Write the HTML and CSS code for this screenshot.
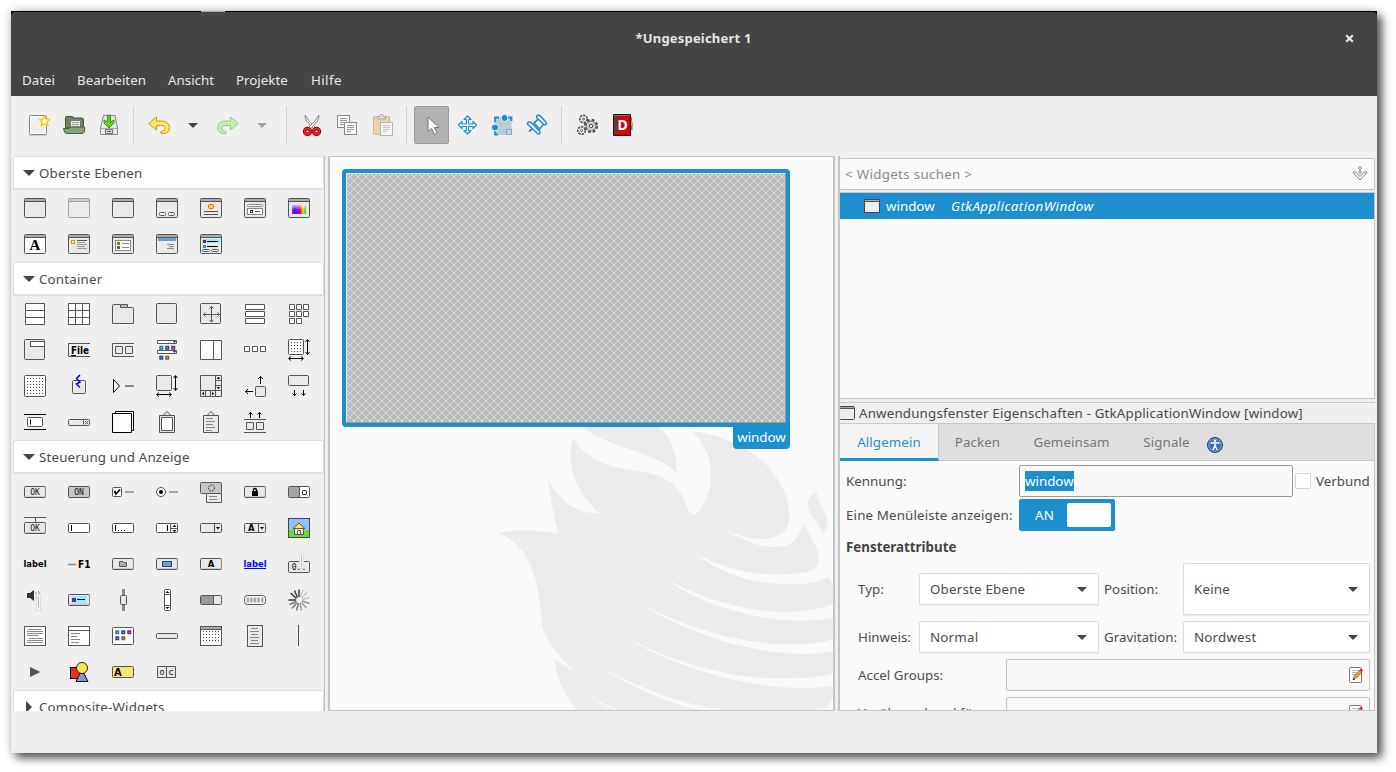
FILE: index.html
```
<!DOCTYPE html>
<html lang="de">
<head>
<meta charset="utf-8">
<title>*Ungespeichert 1</title>
<link rel="stylesheet" href="styles.css">
</head>
<body>
<svg class="defs" width="0" height="0">
  <defs>
    <pattern id="dots" width="3" height="3" patternUnits="userSpaceOnUse"><rect x="1" y="1" width="1" height="1" fill="#444"/></pattern>
    <pattern id="lattice" width="8" height="8" patternUnits="userSpaceOnUse"><path d="M-1 -1L9 9M9 -1L-1 9" stroke="#dcdcdc" stroke-width="1" fill="none"/></pattern>
    <linearGradient id="rainbow"><stop offset="0" stop-color="#e000c0"/><stop offset=".2" stop-color="#2020ff"/><stop offset=".45" stop-color="#a000f0"/><stop offset=".6" stop-color="#f01020"/><stop offset=".78" stop-color="#f0e000"/><stop offset="1" stop-color="#00e060"/></linearGradient>
    <linearGradient id="fade" x1="0" y1="0" x2="0" y2="1"><stop offset="0" stop-color="#fff" stop-opacity=".7"/><stop offset="1" stop-color="#fff" stop-opacity="0"/></linearGradient>
    <symbol id="win" viewBox="0 0 24 24"><rect class="s" x="1.500" y="2.500" width="21" height="19" rx="1"/><path d="M2 4H22" stroke="#aaa" stroke-width="2"/><path class="n" d="M1.500 5.500H22.500"/></symbol>
    <symbol id="btn" viewBox="0 0 24 24"><rect class="s" x="1.500" y="6.500" width="21" height="11" rx="1"/><path d="M3 16.500H22V8" stroke="#ccc" fill="none"/></symbol>
    <symbol id="line" viewBox="0 0 24 24"><rect class="w" x="1.500" y="7.500" width="21" height="9" rx="1"/></symbol>
    <symbol id="varrow" viewBox="0 0 24 24"><path class="b" d="M20.500 2V16M18.500 4L20.500 1.500L22.500 4M18.500 14L20.500 16.500L22.500 14M2 20.500H16M4 18.500L1.500 20.500L4 22.500M14 18.500L16.500 20.500L14 22.500"/></symbol>
    <symbol id="pencil" viewBox="0 0 16 16"><rect x="1.500" y=".5" width="12" height="15" rx="1" fill="#fff" stroke="#777"/><path d="M4 3.500H11M4 5.500H9M4 7.500H8" stroke="#bbb"/><path d="M5 13L6 9.500L12 3L14 5L8 11.500Z" fill="#f0a030" stroke="#9a5a10" stroke-width=".8"/><path d="M5 13L5.500 11L7 12.400Z" fill="#222"/><path d="M11.500 3L13 1.500L15 3.500L13.500 5Z" fill="#d02020"/></symbol>
  </defs>
</svg>
<div class="window">
  <header class="titlebar">
    <div class="title-row"><span class="title">*Ungespeichert 1</span>
      <svg class="close" viewBox="0 0 9 9"><path d="M1.200 1.200L7.800 7.800M7.800 1.200L1.200 7.800" stroke="#e6e6e6" stroke-width="2.200"/></svg></div>
    <nav class="menu"><span class="m1">Datei</span><span class="m2">Bearbeiten</span><span class="m3">Ansicht</span><span class="m4">Projekte</span><span class="m5">Hilfe</span></nav>
  </header>

  <div class="toolbar">
    <span class="tool"><svg viewBox="0 0 24 24"><rect x="2.500" y="2.500" width="17" height="19" rx="1" fill="#eee" stroke="#888"/><rect x="3.500" y="3.500" width="15" height="17" fill="none" stroke="#fff"/><path d="M2 22.500H20" stroke="#ccc"/><path d="M17.500 3L19 6.200L22.500 6.600L20 9L20.700 12.500L17.500 10.800L14.300 12.500L15 9L12.500 6.600L16 6.200Z" fill="#fffef0" stroke="#ecd510" stroke-width="1.700" stroke-linejoin="round"/></svg></span>
    <span class="tool"><svg viewBox="0 0 24 24"><path d="M3.500 15V4.500Q3.500 3.500 5 3.500H10Q11 3.500 12 5H20Q21.500 5 21.500 7V15Z" fill="#6b8560" stroke="#40533b"/><path d="M8.500 15V7.500H18.500V15" fill="#eee" stroke="#777"/><path d="M10 9.500H17M10 11.500H17M10 13.500H17" stroke="#999"/><path d="M1.500 15.500H7L8 14H22.500Q23.500 15 22 19.500Q21.500 20.500 20 20.500H5Q3 20.500 2.500 19Z" fill="#8aa17d" stroke="#4b5f45"/></svg></span>
    <span class="tool"><svg viewBox="0 0 24 24"><path d="M6.500 2.500H18L20.500 15V21.500H3.500V15Z" fill="#e8e8e8" stroke="#888"/><path d="M3.500 15.500H20.500" stroke="#aaa"/><rect x="8.500" y="16.500" width="7" height="4" fill="#ddd" stroke="#777"/><path d="M10 18.500H14" stroke="#555"/><path d="M10.500 2H13.500V9L17 7V10L12 15L7 10V7L10.500 9Z" fill="#65d51b" stroke="#3b960a"/></svg></span>
    <i class="sep"></i>
    <span class="tool"><svg viewBox="0 0 24 24"><path d="M9.500 4L1.500 10.500L9.500 17V12.500H14.500Q18.500 12.500 18 16Q17.800 18.500 14 18.500V20.500Q22.500 21.500 22.500 14.500Q22 8 14.500 8H9.500Z" fill="#fbe472" stroke="#c9a000" stroke-linejoin="round"/></svg></span>
    <span class="drop"></span>
    <span class="tool"><svg viewBox="0 0 24 24"><path d="M14.500 4L22.500 10.500L14.500 17V12.500H9.500Q5.500 12.500 6 16Q6.200 18.500 10 18.500V20.500Q1.500 21.500 1.500 14.500Q2 8 9.500 8H14.500Z" fill="#c5edb0" stroke="#92cf85" stroke-linejoin="round"/></svg></span>
    <span class="drop dim"></span>
    <i class="sep"></i>
    <span class="tool"><svg viewBox="0 0 24 24"><path d="M5 2Q4.500 5 6.500 8L14.500 17L16 15L9.500 8.500Z" fill="#f2f2f2" stroke="#888"/><path d="M19 2Q19.500 5 17.500 8L9.500 17L8 15L14.500 8.500Z" fill="#f2f2f2" stroke="#888"/><g fill="none" stroke="#9b0000" stroke-width="3.600"><circle cx="7.500" cy="18.500" r="2.900"/><circle cx="16.500" cy="18.500" r="2.900"/></g><g fill="none" stroke="#e02a2a" stroke-width="1.800"><circle cx="7.500" cy="18.500" r="2.900"/><circle cx="16.500" cy="18.500" r="2.900"/></g></svg></span>
    <span class="tool"><svg viewBox="0 0 24 24"><rect x="2.500" y="2.500" width="12" height="12" fill="#fafafa" stroke="#888"/><path d="M5 5.500H12M5 7.500H12M5 9.500H12M5 11.500H9" stroke="#999"/><rect x="9.500" y="9.500" width="12" height="12" fill="#fafafa" stroke="#888"/><path d="M12 12.500H19M12 14.500H19M12 16.500H19M12 18.500H16" stroke="#999"/></svg></span>
    <span class="tool"><svg viewBox="0 0 24 24" opacity=".85"><rect x="3.500" y="3.500" width="16" height="18" rx="1" fill="#e8d0a4" stroke="#c6aa7e"/><path d="M7.500 6V3.500H9.500Q9.500 1.500 11.500 1.500T13.500 3.500H15.500V6Z" fill="#ddd" stroke="#999"/><rect x="10.500" y="9.500" width="12" height="13" fill="#f7f7f7" stroke="#aaa"/><path d="M13 12.500H20M13 14.500H20M13 16.500H20M13 18.500H17" stroke="#bbb"/></svg></span>
    <i class="sep"></i>
    <span class="tool active"><svg viewBox="0 0 24 24"><path d="M8 4V18.500L11.500 15.500L14.500 21.500L17 20L14.500 14.500H19Z" fill="#fff" stroke="#777"/></svg></span>
    <span class="tool"><svg viewBox="0 0 24 24"><path d="M12.500 3L16 6.500H13.500V11H18V8.500L21.500 12L18 15.500V13.500H13.500V17.500H16L12.500 21L9 17.500H11.500V13.500H7V15.500L3.500 12L7 8.500V11H11.500V6.500H9Z" fill="#fff" stroke="#1e8fce" stroke-width="1.200" stroke-linejoin="round"/></svg></span>
    <span class="tool"><svg viewBox="0 0 24 24"><rect x="4" y="4" width="17.500" height="18" fill="#b9ccd9"/><path d="M5 9V4.500H9M17 4.500H21.500V8M5 18V21.500H8" fill="none" stroke="#1e8fce" stroke-width="1.800"/><rect x="16.500" y="16.500" width="5" height="5" fill="#c8d5de" stroke="#7fa5bf"/><circle cx="14.500" cy="5" r="3.500" fill="#1e8fce" stroke="#eaf3f9"/><circle cx="5" cy="14.500" r="3.500" fill="#1e8fce" stroke="#eaf3f9"/></svg></span>
    <span class="tool"><svg viewBox="0 0 24 24"><path d="M4 18.500L9 14.500" stroke="#444" stroke-width="1.500"/><g fill="#fff" stroke="#2592d0" stroke-width="1.700" stroke-linejoin="round"><path d="M9 10L14 5.500L19 10.500L14.500 16Z"/><path d="M3 9.500Q2 10.500 3.500 12L12.500 20.500Q14.500 21.500 15 19.500Q15 18 12.500 16L6 9.500Q4.500 8.500 3 9.500Z"/><path d="M12.500 2.500Q10.800 3.500 12.500 5.500L19 11.500Q21 12 21.500 10.500Q21.500 9.500 20 8L15 2.800Q13.800 1.700 12.500 2.500Z"/></g></svg></span>
    <i class="sep"></i>
    <span class="tool"><svg viewBox="0 0 24 24" fill="none" stroke="#555"><circle cx="16" cy="13" r="5.700" stroke-width="3" stroke-dasharray="2.600 1.870"/><circle cx="16" cy="13" r="3.900" fill="#c8c8c8" stroke="#ccc" stroke-width="2"/><circle cx="16" cy="13" r="5" stroke-width=".8"/><circle cx="16" cy="13" r="1.700" fill="#eee"/><circle cx="8.500" cy="6" r="3.400" stroke-width="2.400" stroke-dasharray="2.100 .950"/><circle cx="8.500" cy="6" r="2.800" fill="#eee" stroke="none"/><circle cx="8.500" cy="6" r="1" fill="#fff"/><circle cx="6.500" cy="17.500" r="3.400" stroke-width="2.400" stroke-dasharray="2.100 .950"/><circle cx="6.500" cy="17.500" r="2.800" fill="#eee" stroke="none"/><circle cx="6.500" cy="17.500" r="1" fill="#fff"/></svg></span>
    <span class="tool"><svg viewBox="0 0 24 24"><path d="M21 4H22V9H21Z" fill="#52b520"/><path d="M21 9H23V13H21Z" fill="#f0a010"/><path d="M21 13H22.500V17H21Z" fill="#2a7fce"/><path d="M3.500 1.500H20.500V22.500H3.500Z" fill="#cc0808" stroke="#560000"/><path d="M4 2H7V22H4Z" fill="#454545"/><path d="M4 2.500H20" stroke="#777"/><text x="7.500" y="17" font-size="14" font-weight="700" fill="#fff" font-family="Noto Sans, sans-serif">D</text></svg></span>
  </div>

  <main class="body">
    <aside class="palette">
      <h2 class="group"><i class="tri"></i>Oberste Ebenen</h2>
      <div class="grid">
        <svg viewBox="0 0 24 24"><use href="#win"/></svg>
        <svg viewBox="0 0 24 24" opacity=".5"><use href="#win"/></svg>
        <svg viewBox="0 0 24 24"><use href="#win"/></svg>
        <svg viewBox="0 0 24 24"><use href="#win"/><rect class="w" x="4.500" y="16.500" width="6" height="3" rx="1"/><rect class="w" x="13.500" y="16.500" width="6" height="3" rx="1"/></svg>
        <svg viewBox="0 0 24 24"><use href="#win"/><rect x="9.500" y="8.500" width="5" height="4" rx="1" fill="#ffd83a" stroke="#e06a10"/><path class="n" d="M5 15.500H19M5 18.500H19"/></svg>
        <svg viewBox="0 0 24 24"><use href="#win"/><rect x="4.500" y="8.500" width="15" height="2" rx="1" fill="#fff" stroke="#888"/><rect x="4.500" y="12.500" width="15" height="6" fill="#fff" stroke="#888"/><rect x="7.500" y="14.500" width="2" height="2" fill="#fff" stroke="#333"/><path class="n" d="M12 15.500H17"/></svg>
        <svg viewBox="0 0 24 24"><use href="#win"/><rect x="5" y="9" width="14" height="9" fill="url(#rainbow)"/><rect x="5" y="9" width="14" height="5" fill="url(#fade)"/></svg>
        <svg viewBox="0 0 24 24"><use href="#win"/><path d="M2 6H22V21H2Z" fill="#fff"/><text x="6.500" y="18" font-size="15" font-weight="700" font-family="Liberation Serif, serif">A</text></svg>
        <svg viewBox="0 0 24 24"><use href="#win"/><rect x="4.500" y="8.500" width="3" height="3" fill="#fff3a0" stroke="#c4a000"/><path class="n" d="M10 8.500H20"/><path d="M10 10.500H18M10 12.500H20M10 14.500H18M10 16.500H20" stroke="#999"/></svg>
        <svg viewBox="0 0 24 24"><use href="#win"/><rect x="4.500" y="8.500" width="15" height="10" fill="#fff" stroke="#888"/><path d="M11 11.500H18M11 15.500H18" stroke="#888"/><path d="M6 10h3v3H6z" fill="#4e9a06"/><path d="M6 14h3v3H6z" fill="#75507b"/></svg>
        <svg viewBox="0 0 24 24"><use href="#win"/><path d="M3 6H21V9H3Z" fill="#729fcf"/><path d="M12 12.500H19M14 14.500H19M12 16.500H19" stroke="#888"/></svg>
        <svg viewBox="0 0 24 24"><use href="#win"/><path d="M3 7H21V11H3Z" fill="#9fe6ff"/><path d="M4 8h3v3H4z" fill="#5c1a9c"/><path d="M4 13h3v3H4z" fill="#2a92d0"/><path class="b" d="M8 9.500H19M8 14.500H19"/><rect class="w" x="3.500" y="17.500" width="7" height="2" rx="1"/><rect class="w" x="12.500" y="17.500" width="7" height="2" rx="1"/></svg>
      </div>
      <h2 class="group"><i class="tri"></i>Container</h2>
      <div class="grid">
        <svg viewBox="0 0 24 24"><path class="w" d="M2.500 1.500H21.500V22.500H2.500ZM2.500 8.500H21.500M2.500 15.500H21.500"/></svg>
        <svg viewBox="0 0 24 24"><path class="w" d="M1.500 1.500H22.500V22.500H1.500ZM1.500 8.500H22.500M1.500 15.500H22.500M8.500 1.500V22.500M15.500 1.500V22.500"/></svg>
        <svg viewBox="0 0 24 24"><path class="s" d="M1.500 21.500V3.500Q1.500 2.500 2.500 2.500H9.500V5.500H21.500Q22.500 5.500 22.500 6.500V21.500Z"/><path d="M9.500 5.500V2.500H16.500V5.500Z" fill="#bbb" stroke="#555"/></svg>
        <svg viewBox="0 0 24 24"><rect class="s" x="1.500" y="1.500" width="20" height="20" rx="1"/></svg>
        <svg viewBox="0 0 24 24"><rect class="s" x="1.500" y="1.500" width="20" height="20" rx="1"/><path class="n" d="M12.500 4V20M4.500 12.500H20.500M10.500 6.500L12.500 4.500L14.500 6.500M10.500 18L12.500 20L14.500 18M6.500 10.500L4.500 12.500L6.500 14.500M18.500 10.500L20.500 12.500L18.500 14.500"/></svg>
        <svg viewBox="0 0 24 24"><path class="w" d="M2.500 2.500H21.500V7.500H2.500ZM2.500 9.500H21.500V14.500H2.500ZM2.500 16.500H21.500V21.500H2.500Z"/></svg>
        <svg viewBox="0 0 24 24"><path class="w" d="M2.500 2.500h5v5h-5zM9.500 2.500h5v5h-5zM16.500 2.500h5v5h-5zM2.500 9.500h5v5h-5zM9.500 9.500h5v5h-5zM16.500 9.500h5v5h-5zM2.500 16.500h5v5h-5zM9.500 16.500h5v5h-5z"/></svg>

        <svg viewBox="0 0 24 24"><rect class="s" x="1.500" y="1.500" width="20" height="20" rx="1"/><rect class="w" x="7.500" y="3.500" width="14" height="5"/></svg>
        <svg viewBox="0 0 24 24"><path class="n" d="M23 5.500H1.500V18.500H23"/><text class="tb" x="4" y="15.500" font-size="10" textLength="18" lengthAdjust="spacingAndGlyphs">File</text><path class="b" d="M4 17.500H9"/></svg>
        <svg viewBox="0 0 24 24"><path class="n" d="M23 5.500H1.500V18.500H23"/><path class="s" d="M4.500 8.500h7v7h-7zM14.500 8.500h7v7h-7z"/></svg>
        <svg viewBox="0 0 24 24"><path class="w" d="M2.500 2.500H21.500V5.500H2.500ZM2.500 12.500H21.500V15.500H2.500Z"/><path d="M18 3h3l-1.500 2zM18 13h3l-1.500 2z" fill="#222"/><g fill="#ddd" stroke-width="1.500"><path stroke="#1b8585" d="M5 8.500h2.500v2.500H5z"/><path stroke="#2a409c" d="M11 8.500h2.500v2.500H11zM5 18.500h2.500v2.500H5z"/><path stroke="#75207b" d="M17 8.500h2.500v2.500H17z"/><path stroke="#7a6032" d="M11 18.500h2.500v2.500H11z"/></g></svg>
        <svg viewBox="0 0 24 24"><path class="w" d="M1.500 2.500H22.500V21.500H1.500ZM14.500 2.500V21.500"/></svg>
        <svg viewBox="0 0 24 24"><path class="w" d="M1.500 8.500h5v5h-5zM9.500 8.500h5v5h-5zM17.500 8.500h5v5h-5z"/></svg>
        <svg viewBox="0 0 24 24"><rect class="w" x="1.500" y="1.500" width="15" height="15" rx="1"/><rect x="3" y="3" width="12" height="12" fill="url(#dots)"/><use href="#varrow"/></svg>

        <svg viewBox="0 0 24 24"><rect class="w" x="1.500" y="1.500" width="21" height="21" rx="1"/><rect x="3" y="3" width="18" height="18" fill="url(#dots)"/></svg>
        <svg viewBox="0 0 24 24"><rect class="s" x="5.500" y="6.500" width="13" height="13" rx="1"/><path d="M13 1L9.500 4.500L13 8L9.500 10L13 13.500" fill="none" stroke="#00f" stroke-width="1.500"/></svg>
        <svg viewBox="0 0 24 24"><path class="b" d="M2.500 5.500V18.500L8.500 12Z" fill="#fff"/><path d="M14 12H23" stroke="#8a8a85" stroke-width="2"/></svg>
        <svg viewBox="0 0 24 24"><rect class="s" x="1.500" y="1.500" width="15" height="15" rx="1"/><use href="#varrow"/></svg>
        <svg viewBox="0 0 24 24"><path class="s" d="M1.500 1.500H22.500V22.500H1.500ZM1.500 16.500H22.500M16.500 1.500V22.500M6.500 17V22M11.500 17V22M17 6.500H22M17 11.500H22"/><path d="M17.800 5L19.500 2.800L21.200 5ZM17.800 13L19.500 15.200L21.200 13ZM5 18L2.800 19.500L5 21.200ZM13 18L15.200 19.500L13 21.200Z"/></svg>
        <svg viewBox="0 0 24 24"><rect class="s" x="12.500" y="12.500" width="10" height="10" rx="1"/><path class="b" d="M10 17.500H2.500M5 15L2.500 17.500L5 20M17.500 10V2.500M15 5L17.500 2.500L20 5"/></svg>
        <svg viewBox="0 0 24 24"><rect class="s" x="1.500" y="1.500" width="20" height="10" rx="1"/><path class="b" d="M7.500 16V21.500M5.500 19.500L7.500 21.500L9.500 19.500M16.500 16V21.500M14.500 19.500L16.500 21.500L18.500 19.500"/></svg>

        <svg viewBox="0 0 24 24"><path class="b" d="M1 4.500H23M1 19.500H23"/><rect class="w" x="4.500" y="7.500" width="15" height="9" rx="1"/><path class="b" d="M7.500 9.500V14.500"/></svg>
        <svg viewBox="0 0 24 24"><rect class="s" x="1.500" y="9.500" width="21" height="6" rx="1"/><path class="n" d="M16.500 10.500V14.500M18 11L21 14M21 11L18 14"/></svg>
        <svg viewBox="0 0 24 24"><path class="b" d="M4.500 1.500H22.500V20.500H4.500Z" fill="#fff"/><path class="b" d="M1.500 3.500H20.500V22.500H1.500Z" fill="#fff"/></svg>
        <svg viewBox="0 0 24 24"><path class="s" d="M8 5.500L12 1.500L16 5.500M4.500 5.500H19.500V22.500H4.500Z"/><path class="w" d="M6.500 7.500H17.500V20.500H6.500Z"/></svg>
        <svg viewBox="0 0 24 24"><path class="s" d="M8 5.500L12 1.500L16 5.500M4.500 5.500H19.500V22.500H4.500Z"/><path d="M7 8.500H14M7 11.500H16M7 14.500H14M7 17.500H16M7 20.500H13" stroke="#888"/></svg>
        <svg viewBox="0 0 24 24"><path class="n" d="M1 9.500H23M1 22.500H23"/><path class="s" d="M3.500 12.500h7v7h-7zM13.500 12.500h7v7h-7z"/><path class="b" d="M7.500 8V2.500M5.500 4.500L7.500 2.500L9.500 4.500M16.500 8V2.500M14.500 4.500L16.500 2.500L18.500 4.500"/></svg>
      </div>
      <h2 class="group"><i class="tri"></i>Steuerung und Anzeige</h2>
      <div class="grid">
        <svg viewBox="0 0 24 24"><use href="#btn"/><text class="t" x="12" y="15" font-size="8">OK</text></svg>
        <svg viewBox="0 0 24 24"><rect x="1.500" y="6.500" width="21" height="11" rx="1" fill="#c6c6c6" stroke="#555"/><text class="t" x="12" y="15" font-size="8">ON</text></svg>
        <svg viewBox="0 0 24 24"><rect class="w" x="1.500" y="7.500" width="9" height="9" rx="1"/><path d="M3.500 11L5 14L9 9.500" fill="none" stroke="#000" stroke-width="1.700"/><path d="M14 12H23" stroke="#8a8a85" stroke-width="1.500"/></svg>
        <svg viewBox="0 0 24 24"><circle class="w" cx="6" cy="12" r="4.500"/><circle cx="6" cy="12" r="2"/><path d="M14 12H23" stroke="#8a8a85" stroke-width="1.500"/></svg>
        <svg viewBox="0 0 24 24"><rect x="1.500" y="2.500" width="21" height="11" rx="1" fill="#c6c6c6" stroke="#555"/><circle cx="12.500" cy="8" r="3" fill="none" stroke="#222" stroke-dasharray="1.500 1"/><path class="s" d="M7.500 13.500H22.500V22.500H7.500Z"/><path d="M10 16.500H18M10 19.500H18" stroke="#888"/></svg>
        <svg viewBox="0 0 24 24"><use href="#btn"/><rect x="9" y="11" width="6" height="5"/><path d="M10.500 11V9.500Q12 7.500 13.500 9.500V11" fill="none" stroke="#000" stroke-width="1.300"/></svg>
        <svg viewBox="0 0 24 24"><rect class="w" x="1.500" y="6.500" width="21" height="11" rx="1"/><path d="M2 7H12V17H2Z" fill="#a5a5a5"/><path class="n" d="M12.500 7V17"/><rect x="15.500" y="10.500" width="4" height="4" rx="1" fill="none" stroke="#000"/></svg>

        <svg viewBox="0 0 24 24"><path class="n" d="M1 1.500H23M12.500 1.500V6"/><use href="#btn"/><text class="t" x="12" y="15" font-size="8">OK</text></svg>
        <svg viewBox="0 0 24 24"><use href="#line"/><path class="b" d="M4.500 9V15"/></svg>
        <svg viewBox="0 0 24 24"><use href="#line"/><path class="b" d="M4.500 9V15M7 14.500h1M10 14.500h1M13 14.500h1"/></svg>
        <svg viewBox="0 0 24 24"><use href="#line"/><path class="n" d="M15.500 7V17M16 12.500H22"/><path class="b" d="M12.500 9V15"/><path d="M17.500 11L19.500 8.500L21.500 11ZM17.500 14L19.500 16.300L21.500 14Z"/></svg>
        <svg viewBox="0 0 24 24"><rect class="s" x="1.500" y="7.500" width="21" height="9" rx="1"/><path class="n" d="M15.500 7V17"/><path d="M17 11H21L19 13.500Z"/></svg>
        <svg viewBox="0 0 24 24"><rect class="s" x="1.500" y="7.500" width="21" height="9" rx="1"/><text class="tb" x="5" y="15.200" font-size="8.500">A</text><path class="n" d="M15.500 7V17"/><path d="M17 11H21L19 13.500Z"/></svg>
        <svg viewBox="0 0 24 24"><rect x="1.500" y="2.500" width="21" height="19" fill="#8ec1ff" stroke="#444"/><path d="M2 14H22V21H2Z" fill="#77d62c"/><path d="M7.500 12V18.500H16.500V12" fill="#eee" stroke="#555"/><path d="M6 12.500L12 7L18 12.500Z" fill="#ffe14a" stroke="#665a20"/><path d="M10.500 18V14.500H13.500V18" fill="#fff" stroke="#555"/></svg>

        <svg viewBox="0 0 24 24"><text class="tb" x="0.500" y="15" font-size="9.500" textLength="23" lengthAdjust="spacingAndGlyphs">label</text></svg>
        <svg viewBox="0 0 24 24"><path d="M1 12.500H9" stroke="#888" stroke-width="1.500"/><text class="tb" x="11" y="16" font-size="10" textLength="12.500" lengthAdjust="spacingAndGlyphs">F1</text></svg>
        <svg viewBox="0 0 24 24"><use href="#btn"/><path d="M8.500 14.500V9.500H12L13 10.500H15.500V14.500Z" fill="#aaa" stroke="#555"/></svg>
        <svg viewBox="0 0 24 24"><use href="#btn"/><rect x="7.500" y="9.500" width="9" height="5" fill="#729fcf" stroke="#204a87"/></svg>
        <svg viewBox="0 0 24 24"><use href="#btn"/><text class="tb" x="8.700" y="15.200" font-size="8.500">A</text></svg>
        <svg viewBox="0 0 24 24"><text class="tb" fill="#00f" x="0.500" y="15" font-size="9.500" textLength="23" lengthAdjust="spacingAndGlyphs">label</text><path d="M1 16.500H23" stroke="#00f"/></svg>
        <svg viewBox="0 0 24 24"><rect class="s" x="1.500" y="9.500" width="21" height="11" rx="1"/><text class="t" x="12" y="18" font-size="8">0..</text><rect x="12.500" y="1.500" width="4" height="15" fill="#f4f4f4" stroke="#ddd"/><path d="M14.500 3V15" stroke="#9cc3e8"/></svg>

        <svg viewBox="0 0 24 24"><path d="M4 5H7L11 2V13L7 10H4Z" fill="#333"/><path d="M12.500 4Q15 7 12.500 11M15 3Q18.500 7 15 12" fill="none" stroke="#999"/><rect x="13.500" y="6.500" width="4" height="16" fill="#f4f4f4" stroke="#ddd"/><path d="M15.500 8V20" stroke="#9cc3e8"/></svg>
        <svg viewBox="0 0 24 24"><use href="#btn"/><rect x="4" y="8" width="16" height="8" fill="#9fe6ff"/><rect x="5" y="10" width="4" height="4" fill="#75209b"/><path class="b" d="M10 11.500H18"/></svg>
        <svg viewBox="0 0 24 24"><path d="M12.500 1V23" stroke="#888" stroke-width="3"/><rect class="s" x="9.500" y="7.500" width="6" height="9" rx="1"/></svg>
        <svg viewBox="0 0 24 24"><rect class="w" x="9.500" y="1.500" width="6" height="21" rx="1"/><path class="n" d="M9.500 6.500H15.500M9.500 17.500H15.500"/><path d="M10.500 5L12.500 3L14.500 5ZM10.500 19L12.500 21L14.500 19Z"/></svg>
        <svg viewBox="0 0 24 24"><rect class="s" x="1.500" y="7.500" width="21" height="9" rx="1"/><path d="M2 8H14V16H2Z" fill="#999"/><path class="n" d="M14.500 7V17"/></svg>
        <svg viewBox="0 0 24 24"><rect class="w" x="1.500" y="7.500" width="21" height="9" rx="3"/><path d="M3.500 12H20.500" stroke="#a5a5a5" stroke-width="5" stroke-dasharray="2.600 1"/></svg>
        <svg viewBox="0 0 24 24" stroke-width="1.400"><path d="M12 9V1.500M10.500 9.500L7.500 2.500M9.500 10.500L3.500 5M9 12H1.500" stroke="#333"/><path d="M9.500 13.500L2.500 16.500M10 14.500L5 20.500M11.500 15L9.500 22.500" stroke="#777"/><path d="M13 15L14.500 22.500M14.500 14.500L19.500 20M15 13L22.500 15.500" stroke="#999"/><path d="M15 11.500L22.500 9.500M14.500 10L20 4.500M13.500 9L16 2" stroke="#c5c5c5"/></svg>

        <svg viewBox="0 0 24 24"><rect class="w" x="1.500" y="2.500" width="21" height="19"/><path d="M5 5.500H18M4 7.500H20M4 9.500H20M4 11.500H15M6 14.500H20M4 16.500H20M4 18.500H20" stroke="#888"/></svg>
        <svg viewBox="0 0 24 24"><rect class="w" x="1.500" y="2.500" width="21" height="19"/><path class="n" d="M1.500 6.500H22.500"/><path d="M4 9.500H13M4 12.500H10M4 15.500H13M4 18.500H12" stroke="#888"/></svg>
        <svg viewBox="0 0 24 24"><rect class="w" x="1.500" y="3.500" width="21" height="17" rx="1"/><g fill="#ddd" stroke-width="1.500"><path stroke="#1b8585" d="M5 7h2.500v2.500H5z"/><path stroke="#2a409c" d="M11 7h2.500v2.500H11zM5 13h2.500v2.500H5z"/><path stroke="#75207b" d="M17 7h2.500v2.500H17z"/><path stroke="#7a6032" d="M11 13h2.500v2.500H11z"/></g></svg>
        <svg viewBox="0 0 24 24"><rect class="s" x="1.500" y="9.500" width="21" height="5" rx="1"/></svg>
        <svg viewBox="0 0 24 24"><rect class="w" x="1.500" y="2.500" width="21" height="19"/><path d="M2 4H22" stroke="#aaa" stroke-width="2"/><path class="n" d="M1.500 5.500H22.500"/><rect x="3" y="7" width="18" height="12" fill="url(#dots)"/></svg>
        <svg viewBox="0 0 24 24"><rect class="s" x="4.500" y="1.500" width="15" height="21"/><path d="M8 4.500H15M7 7.500H16M8 10.500H15M7 13.500H16M8 16.500H15M7 19.500H16" stroke="#888"/></svg>
        <svg viewBox="0 0 24 24"><path class="n" d="M11.500 1V22"/></svg>

        <svg viewBox="0 0 24 24"><path d="M7 7V17L17.500 12Z" fill="#555"/></svg>
        <svg viewBox="0 0 24 24"><rect x="3.500" y="7.500" width="11" height="11" fill="#ef2929" stroke="#000"/><circle cx="15" cy="8" r="5.500" fill="#fce94f" stroke="#222"/><path d="M9 21.500L13 13.500H17L21 21.500Z" fill="#729fcf" stroke="#111"/></svg>
        <svg viewBox="0 0 24 24"><rect x="1.500" y="6.500" width="21" height="11" rx="1" fill="#f5e86e" stroke="#555"/><text class="tb" x="3" y="16" font-size="10">A</text></svg>
        <svg viewBox="0 0 24 24"><path class="s" d="M2.500 6.500H11.500V17.500H2.500ZM11.500 6.500H20.500V17.500H11.500Z"/><text class="t" x="7" y="15" font-size="9">o</text><text class="t" x="16" y="15" font-size="9">c</text></svg>
      </div>
      <h2 class="group"><i class="tri closed"></i>Composite-Widgets</h2>
    </aside>

    <section class="canvas">
      <svg class="bird" viewBox="0 0 1080 900"><g fill="#ececec">
        <path d="M308 50C370 110 520 120 590 188C590 130 575 80 533 50Z"/>
        <path d="M278 84C310 135 360 165 430 177C500 188 535 190 575 220C610 250 615 280 628 305Q640 322 655 305C680 270 693 240 693 195C693 130 670 105 638 63C720 75 800 110 850 155C900 205 928 260 928 320C925 400 830 400 742 363C800 400 850 412 890 411C935 408 955 390 970 340C985 375 1016 410 1016 445C1016 470 1012 475 985 485C900 505 760 495 645 430C720 490 820 522 900 521L975 521C1000 521 1020 512 1045 502L1060 525V582C1000 605 930 608 870 604C760 595 640 555 556 505C650 580 820 632 960 632Q1010 632 1060 624V686C1020 705 920 706 860 700C730 685 600 645 484 582C600 660 800 732 980 732Q1020 732 1060 725V788C1030 805 900 810 820 802C680 785 540 740 420 672C540 750 760 834 970 834Q1020 834 1060 827V860Q1050 900 1000 900H725C600 880 480 835 368 774C460 835 560 880 660 900H410L325 859Q360 883 400 900H291C250 850 228 800 224 746Q255 770 287 788C260 765 195 690 188 650C175 570 180 420 55 370Q130 350 235 373Q215 300 204 200C220 260 290 315 355 309C290 240 262 190 275 95Z"/>
        <path d="M1010 245C1012 285 1042 300 1042 335Q1042 355 1027 370C1015 330 982 312 982 280Q985 258 1010 245Z"/>
      </g></svg>
      <div class="design"><svg width="440" height="250"><rect width="440" height="250" fill="#bababa"/><rect width="440" height="250" fill="url(#lattice)"/><path d="M.5 250V.5H440" fill="none" stroke="#e4e4e4"/><path d="M0 249.500H439.500V0" fill="none" stroke="#999"/></svg></div>
      <div class="design-label">window</div>
    </section>

    <section class="side">
      <div class="search"><span>&lt; Widgets suchen &gt;</span><svg viewBox="0 0 16 16"><path d="M1 6.500L8 14L15 6.500Q14 4.500 12 6.500L8 10.500L4 6.500Q2 4.500 1 6.500Z" fill="#fff" stroke="#777"/><circle cx="8" cy="6" r="1.300" fill="#fff" stroke="#777" stroke-width=".8"/><circle cx="8" cy="2" r="1.300" fill="#fff" stroke="#777" stroke-width=".8"/></svg></div>
      <div class="tree"><div class="tree-row"><svg viewBox="0 0 16 14"><rect x=".5" y=".5" width="15" height="13" fill="#ededed" stroke="#444"/><path d="M1 1.500H15" stroke="#aaa"/><path d="M0 2.500H16" stroke="#555"/></svg><span class="obj">window</span><em>GtkApplicationWindow</em></div></div>
      <div class="props-title"><svg viewBox="0 0 16 14"><rect x=".5" y=".5" width="15" height="13" rx="1" fill="#ededed" stroke="#444"/><path d="M1 1.500H15" stroke="#aaa"/><path d="M0 2.500H16" stroke="#555"/></svg><span>Anwendungsfenster Eigenschaften - GtkApplicationWindow [window]</span></div>
      <div class="tabs"><span class="tab on">Allgemein</span><span class="tab t2">Packen</span><span class="tab t3">Gemeinsam</span><span class="tab t4">Signale</span>
        <svg class="a11y" viewBox="0 0 16 16"><circle cx="8" cy="8" r="7.500" fill="#3e6db5" stroke="#1c3a70"/><circle cx="8" cy="8" r="6.300" fill="none" stroke="#9db9e0" stroke-width=".8"/><circle cx="8" cy="3.700" r="1.300" fill="#fff"/><path d="M3.500 6H12.500M8 6V9.500M8 8.500L5.800 13M8 8.500L10.200 13" stroke="#fff" stroke-width="1.400" fill="none"/></svg></div>
      <div class="form">
        <div class="row"><label class="lbl">Kennung:</label><div class="entry focus"><span class="sel">window</span></div><i class="check"></i><span class="verbund">Verbund</span></div>
        <div class="row r2"><label class="lbl wide">Eine Menüleiste anzeigen:</label><div class="switch"><span>AN</span><i></i></div></div>
        <h3 class="section-title">Fensterattribute</h3>
        <div class="attrs">
          <label>Typ:</label><div class="combo">Oberste Ebene</div><label class="l2">Position:</label><div class="combo tall">Keine</div>
          <label>Hinweis:</label><div class="combo">Normal</div><label class="l2">Gravitation:</label><div class="combo">Nordwest</div>
        </div>
        <div class="obj-row"><label>Accel Groups:</label><div class="entry"><svg viewBox="0 0 16 16"><use href="#pencil"/></svg></div></div>
        <div class="obj-row"><label>Vorübergehend für:</label><div class="entry"><svg viewBox="0 0 16 16"><use href="#pencil"/></svg></div></div>
      </div>
    </section>
  </main>
</div>
</body>
</html>
```
FILE: styles.css
```
* { box-sizing: border-box; }
body { margin: 0; width: 1396px; height: 772px; padding: 11px; overflow: hidden; background: #fff; font: 13.33px/18px "Noto Sans", sans-serif; color: #4a4a4a; }
.defs { position: absolute; }
svg { display: block; flex: none; }
h2, h3 { margin: 0; font-size: inherit; }
.s { fill: #e9e9e9; stroke: #555; }
.w { fill: #fff; stroke: #555; }
.n { fill: none; stroke: #555; }
.b { stroke: #000; fill: none; }
.b[fill="#fff"] { fill: #fff; }
.t { font-family: "DejaVu Sans Mono", monospace; fill: #111; text-anchor: middle; }
.tb { font-family: "DejaVu Sans", sans-serif; font-weight: 700; }

.window { width: 1366px; height: 742px; display: flex; flex-direction: column; background: linear-gradient(90deg, transparent 190px, #aaa 190px, #aaa 214px, transparent 214px) 0 0 / 100% 1px no-repeat, linear-gradient(#000, #000) 0 0 / 100% 12px no-repeat, #efefef; box-shadow: 5px 5px 9px rgba(0,0,0,.66), 0 0 9px rgba(0,0,0,.2); }
.titlebar { flex: none; height: 84px; margin-top: 1px; border-radius: 4px 4px 0 0; background: #444; color: #eee; display: flex; flex-direction: column; }
.title-row { height: 52px; display: flex; align-items: center; justify-content: center; padding-left: 31px; }
.title { flex: 1; text-align: center; font-weight: 700; font-size: 13px; letter-spacing: .2px; color: #e4e4e4; }
.close { width: 9px; height: 9px; margin-right: 23px; }
.menu { display: flex; padding: 7px 0 0 11px; color: #e8e8e8; }
.menu span { white-space: nowrap; flex: none; }
.menu .m1 { width: 55px; } .menu .m2 { width: 91px; } .menu .m3 { width: 68px; } .menu .m4 { width: 75px; } .menu .m5 { letter-spacing: .4px; }

.toolbar { flex: none; height: 60px; padding: 10px 0 0 10px; display: flex; }
.tool { width: 35px; height: 38px; display: flex; align-items: center; justify-content: center; }
.tool svg { width: 24px; height: 24px; }
.tool.active { background: #b1b1b1; border: 1px solid #9b9b9b; border-radius: 2px; }
.sep { width: 15px; height: 37px; background: linear-gradient(#d3d3d3, #d3d3d3) 7px 0 / 1px 100% no-repeat; }
.drop { width: 34px; height: 38px; display: flex; align-items: center; justify-content: center; }
.drop::after { content: ""; border: 5px solid transparent; border-top-color: #444; border-bottom: 0; }
.drop.dim { opacity: .45; }

.body { height: 555px; flex: none; display: grid; grid-template-columns: 314px 507px 537px; column-gap: 3px; }
.palette { height: 555px; overflow: hidden; padding-left: 2px; border-right: 1px solid #c0c0c0; }
.group { height: 34px; width: 311px; border: 1px solid #dedede; border-bottom-width: 2px; border-radius: 2px; background: #fff; font-weight: 400; letter-spacing: .18px; display: flex; align-items: center; padding-left: 9px; }
.tri { border: 6px solid transparent; border-top: 6px solid #444; border-bottom: 0; margin-right: 4px; }
.tri.closed { border: 6px solid transparent; border-left: 6px solid #444; border-right: 0; margin: 0 7px 0 3px; }
.grid { display: grid; grid-template-columns: repeat(7, 44px); grid-auto-rows: 36px; place-items: center; justify-content: start; }
.grid > svg { width: 24px; height: 24px; }

.canvas { position: relative; overflow: hidden; background: #fafafa; border: 1px solid #c4c4c4; border-width: 1px 2px; padding: 12px; }
.bird { position: absolute; left: 150px; top: 253px; width: 360px; height: 300px; }
.design { position: relative; width: 448px; height: 258px; border: 4px solid #1e8fce; border-radius: 4px 4px 0 4px; background: #1e8fce; }
.design-label { position: relative; width: 57px; height: 22px; margin-left: 391px; background: #1e8fce; border-radius: 0 0 4px 4px; color: #fff; text-align: center; line-height: 21px; }

.side { height: 555px; overflow: hidden; border-left: 2px solid #c4c4c4; display: flex; flex-direction: column; }
.search { flex: none; height: 32px; margin-top: 2px; border: 1px solid #c6c6c6; border-left: 0; border-radius: 2px; background: #fafafa; display: flex; align-items: center; justify-content: space-between; padding: 0 6px 0 5px; color: #8b8b8b; letter-spacing: .32px; }
.search svg { width: 16px; height: 16px; }
.tree { flex: none; height: 207px; margin-top: 2px; border: 1px solid #c6c6c6; border-left: 0; background: #fafafa; }
.tree-row { height: 26px; background: #1e8fce; color: #fff; display: flex; align-items: center; padding-left: 24px; }
.tree-row svg { width: 16px; height: 14px; }
.tree-row em { letter-spacing: .44px; }
.obj { margin-left: 6px; width: 65px; }
.props-title { flex: none; height: 21px; margin-top: 3px; border-top: 1px solid #c6c6c6; display: flex; align-items: center; white-space: nowrap; letter-spacing: .17px; }
.props-title svg { width: 16px; height: 14px; margin: 0 4px 0 -1px; position: relative; }
.side .props-title { margin-left: -1px; padding-left: 1px; }
.tabs { flex: none; height: 38px; border: 1px solid #c8c8c8; border-left: 0; background: #dfdfdf; display: flex; color: #777; }
.tab { height: 37px; line-height: 36px; text-align: center; flex: none; letter-spacing: .1px; }
.tab.on { width: 99px; background: #f4f4f4; color: #1e8fce; border-right: 1px solid #c8c8c8; border-bottom: 3px solid #1e8fce; }
.t2 { width: 77px; } .t3 { width: 111px; } .t4 { width: 79px; }
.a11y { width: 16px; height: 16px; margin: 13px 0 0 1px; }
.form { flex: 1; min-height: 0; overflow: hidden; background: #fafafa; border-right: 1px solid #c6c6c6; border-bottom: 1px solid #c6c6c6; padding: 4px 4px 0 6px; }
.row { display: flex; align-items: center; white-space: nowrap; }
.lbl { width: 173px; flex: none; }
.lbl.wide { letter-spacing: .14px; }
.entry { height: 32px; border: 1px solid #c4c4c4; border-radius: 2px; background: #f8f8f8; display: flex; align-items: center; justify-content: flex-end; padding: 0 5px; }
.entry svg { width: 16px; height: 16px; }
.entry.focus { width: 274px; flex: none; border-color: #999; justify-content: flex-start; }
.sel { background: #1e8fce; color: #fff; height: 20px; line-height: 20px; }
.check { width: 16px; height: 16px; margin: 0 5px 0 2px; flex: none; border: 1px solid #d6d6d6; border-radius: 2px; background: #fff; }
.r2 { margin-top: 2px; }
.switch { width: 96px; height: 32px; border-radius: 2px; background: #1e8fce; color: #fff; display: flex; align-items: center; justify-content: space-between; padding: 0 4px 0 16px; letter-spacing: .3px; }
.switch i { width: 44px; height: 24px; background: #fff; border-radius: 2px; }
.section-title { height: 32px; line-height: 33px; font-weight: 700; color: #444; }
.attrs { padding-left: 12px; display: grid; grid-template-columns: 61px 180px 84px 187px; row-gap: 6px; align-items: center; }
.l2 { padding-left: 5px; }
.combo { height: 32px; border: 1px solid #dcdcdc; border-radius: 2px; background: #fff; box-shadow: 0 1px 0 #e8e8e8; display: flex; align-items: center; justify-content: space-between; padding: 0 11px 0 10px; letter-spacing: .2px; }
.combo::after { content: ""; border: 5px solid transparent; border-top-color: #444; border-bottom: 0; }
.combo.tall { height: 52px; }
.obj-row { display: grid; grid-template-columns: 148px 364px; align-items: center; padding-left: 12px; margin-top: 6px; white-space: nowrap; }
```
